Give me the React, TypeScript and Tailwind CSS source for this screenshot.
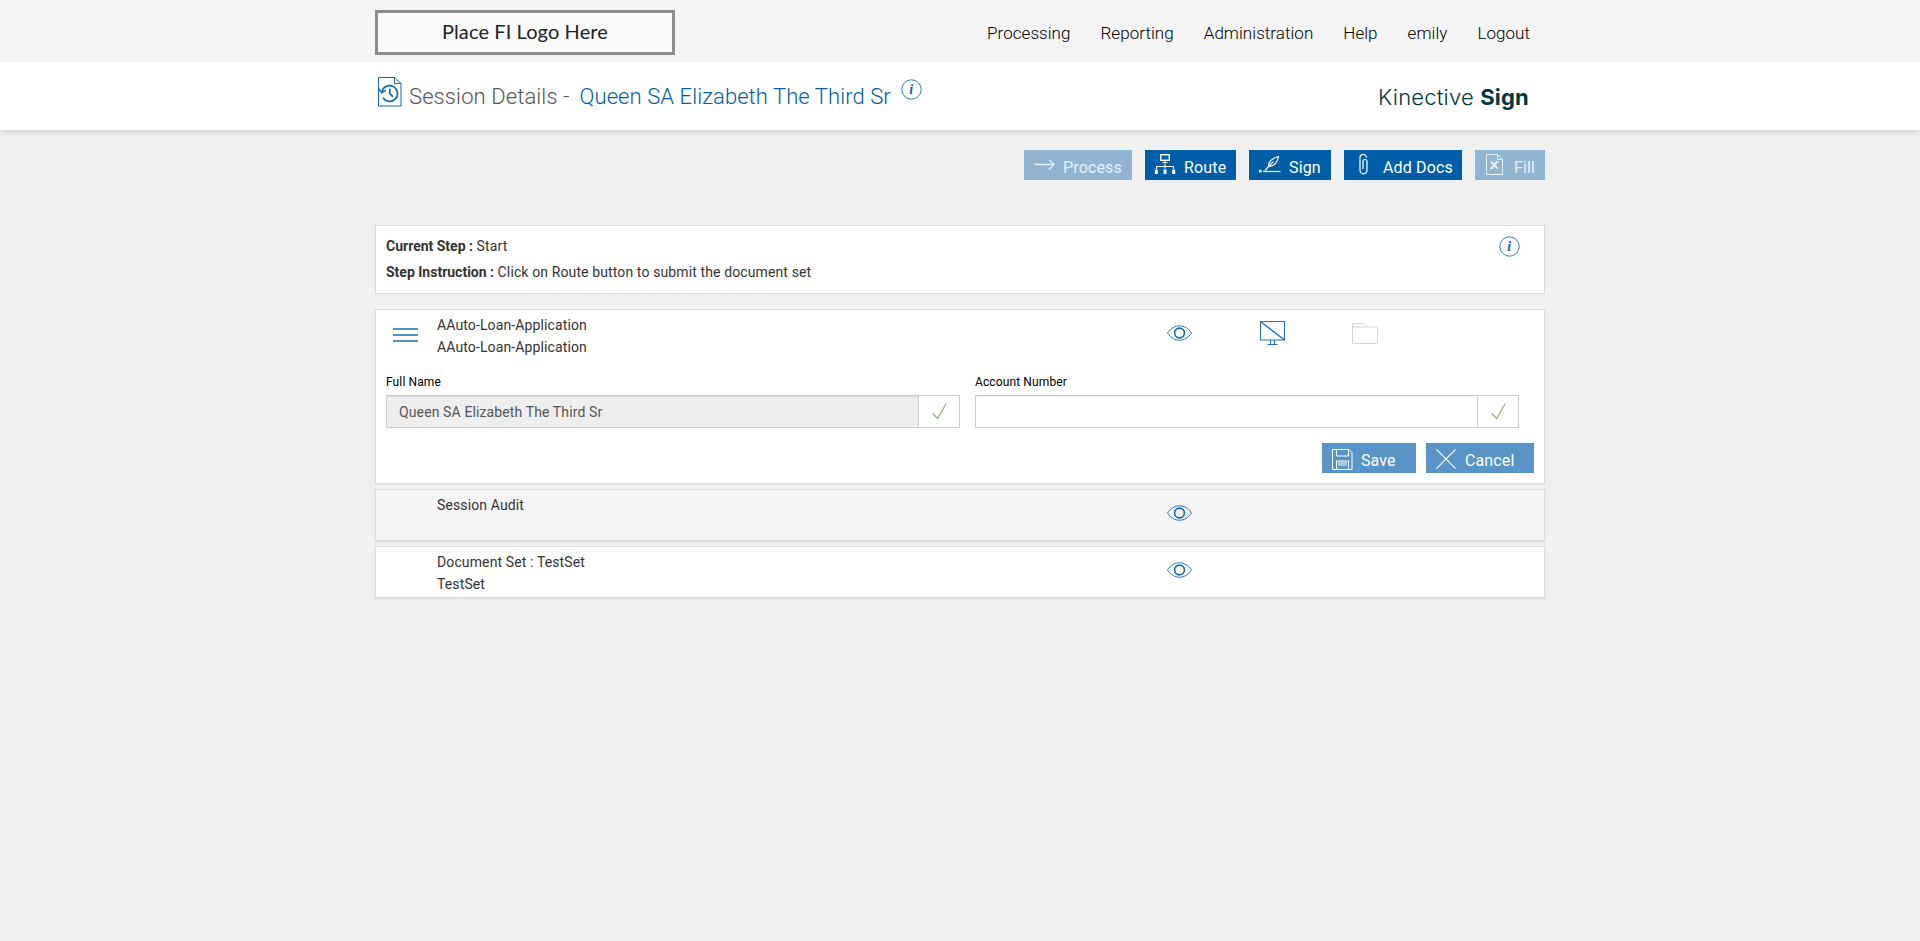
import React from "react";
import clsx from "clsx";

const NAV_LINKS = ["Processing", "Reporting", "Administration", "Help", "emily", "Logout"];

const InfoIcon = ({ className }: { className?: string }) => (
  <svg viewBox="0 0 21 21" className={clsx("w-[21px] h-[21px]", className)} fill="none">
    <circle cx="10.5" cy="10.5" r="9.7" stroke="#1a70b0" strokeWidth="0.9" />
    <text
      x="10.3"
      y="15.2"
      textAnchor="middle"
      fill="#0a62a8"
      className="font-['Liberation_Serif',serif] text-[14px] font-bold italic"
    >
      i
    </text>
  </svg>
);

const SessionIcon = () => (
  <svg viewBox="0 0 24 30" className="w-6 h-[30px]" fill="none" stroke="#0f68ac">
    <path d="M16.5 .5H.5v28.5h22.5V6.5z" strokeWidth="1" />
    <path d="M16.5 .5v6h6.5" strokeWidth="1" />
    <path d="M4 14.5a7.9 7.9 0 1 1 1 6.3" strokeWidth="1.6" />
    <path d="M1 12l2.8 3.8 4-2.6" strokeWidth="1.5" />
    <path d="M11.8 11.5v5l3 3.2" strokeWidth="1.7" />
  </svg>
);

const ArrowIcon = () => (
  <svg viewBox="0 0 22 12" className="w-[22px] h-3" fill="none" stroke="white" strokeWidth="1.3">
    <path d="M.5 5.5h20M15 .8l5 4.7-5 4.7" />
  </svg>
);

const RouteIcon = () => (
  <svg viewBox="0 0 22 21" className="w-[22px] h-[21px]" fill="none" stroke="white" strokeWidth="1">
    <rect x="6.7" y=".7" width="8.6" height="5.6" strokeWidth="1.4" />
    <path d="M8.5 8.5h5M11 6.5v8M2.5 15v-2.500h17V15" />
    <path d="M.8 15.500h3v4.500h-3zM9.500 15.500h3v4.500h-3zM18.200 15.500h3v4.500h-3z" fill="white" stroke="none" />
  </svg>
);

const SignIcon = () => (
  <svg viewBox="0 0 22 17" className="w-[22px] h-[17px]" fill="none" stroke="white" strokeWidth="1.2">
    <path d="M4 15.500h17.500" />
    <path d="M0 13.800h2.500v2.500H0z" fill="white" stroke="none" />
    <path d="M6 14.500l4-4.500M9.500 10.500c-.3-4.500 3.500-8 10-10-.8 5-4 9.500-10 10zM10.500 9.500l4-4" />
  </svg>
);

const ClipIcon = () => (
  <svg viewBox="0 0 9 21" className="w-[9px] h-[21px]" fill="none" stroke="white" strokeWidth="1.2">
    <path d="M1 4.500v11.500a3.500 3.800 0 0 0 7 0V7.500a2 2 0 0 0-4 0v7.500M1 5V4a3 3 0 0 1 6.500-.5" />
  </svg>
);

const FillIcon = () => (
  <svg viewBox="0 0 17 21" className="w-[17px] h-[21px]" fill="none" stroke="white" strokeWidth="1">
    <path d="M11.500 .5H.5v20h16v-15zM11.500 .5v5h5" />
    <path d="M5 7.500l6.500 7M11.500 7.500l-6.500 7" strokeWidth="2" />
    <path d="M4 14.500h3M10.500 7.500h2.500" />
  </svg>
);

const MenuIcon = () => (
  <svg viewBox="0 0 25 14" className="w-[25px] h-[14px]" stroke="#1a70b0" strokeWidth="1.500">
    <path d="M0 1h25M0 7h25M0 13h25" />
  </svg>
);

const EyeIcon = () => (
  <svg viewBox="0 0 25 16" className="w-[25px] h-4" fill="none" stroke="#0f68ac">
    <path d="M.5 8C4 3 8 .8 12.500 .8S21 3 24.500 8C21 13 17 15.200 12.500 15.200S4 13 .5 8z" strokeWidth=".9" />
    <circle cx="12.500" cy="8" r="4.900" strokeWidth="1.600" />
  </svg>
);

const MonitorIcon = () => (
  <svg viewBox="0 0 25 24" className="w-[25px] h-6" fill="none" stroke="#1a70b0" strokeWidth="1">
    <rect x=".5" y=".5" width="24" height="18.500" />
    <path d="M.5 .5l24 18.500" strokeWidth="1.300" />
    <path d="M10.500 19v4.500M14.500 19v4.500M7.500 23.500h10" />
  </svg>
);

const FolderIcon = () => (
  <svg viewBox="0 0 26 21" className="w-[26px] h-[21px]" fill="none" stroke="#d9d4d0" strokeWidth="1">
    <path d="M.5 20.500V.5h10.500l4 3.500h10.500v16.500zM.5 4h14.500" />
  </svg>
);

const CheckIcon = () => (
  <svg viewBox="0 0 15 17" className="w-[15px] h-[17px]" fill="none" stroke="#8fb36a" strokeWidth="1.200">
    <path d="M.7 10.500l5 5L14 .7" />
  </svg>
);

const SaveIcon = () => (
  <svg viewBox="0 0 21 21" className="w-[21px] h-[21px]" fill="none" stroke="white" strokeWidth="1">
    <path d="M.5 .5h16.500l3 3v17H.5z" />
    <path d="M4.500 .5v6.500h12V.5M4.500 20.500v-8.500h12v8.500M6 14h9M6 16h9" />
  </svg>
);

const CloseIcon = () => (
  <svg viewBox="0 0 20 20" className="w-5 h-5" stroke="white" strokeWidth="1.200">
    <path d="M.4 .4l19.200 19.200M19.600 .4L.4 19.600" />
  </svg>
);

type ActionProps = {
  label: string;
  icon: React.ReactNode;
  className: string;
  iconClass: string;
  disabled?: boolean;
};

const ActionButton = ({ label, icon, className, iconClass, disabled }: ActionProps) => (
  <button
    disabled={disabled}
    className={clsx(
      "flex h-[30px] items-start text-[16px] leading-5 tracking-[0.15px] text-white",
      disabled ? "bg-[#91b4d2]" : "bg-[#005ea8]",
      className
    )}
  >
    <span className={clsx("flex shrink-0 justify-start", disabled && "opacity-80", iconClass)}>{icon}</span>
    <span className={clsx("mt-[8px] whitespace-nowrap", disabled && "opacity-80")}>{label}</span>
  </button>
);

type FieldProps = {
  label: string;
  value?: string;
  disabled?: boolean;
  className: string;
};

const Field = ({ label, value, disabled, className }: FieldProps) => (
  <div className={className}>
    <label className="block h-5 text-[12px] leading-[14px] text-black">{label}</label>
    <div className="flex h-[33px] border border-[#ccc]">
      <div
        className={clsx(
          "flex-1 border-r border-[#ccc] pl-3 text-[14px] leading-[33px] text-[#555] shadow-[inset_0_1px_1px_rgba(0,0,0,0.075)]",
          disabled ? "bg-[#eee]" : "bg-white"
        )}
      >
        {value}
      </div>
      <div className="flex w-[40px] items-center justify-center bg-white">
        <CheckIcon />
      </div>
    </div>
  </div>
);

const App = () => {
  return (
    <div className="min-h-screen bg-[#f0f0f0] font-[Roboto,sans-serif] text-[14px] tracking-[0.12px] text-[#333]">
      <header className="h-[62px] bg-[#f4f4f4]">
        <div className="mx-auto flex w-[1170px] justify-between">
          <div className="mt-[10px] flex h-[45px] w-[300px] justify-center border-[3px] border-[#8c8c8c] bg-[#fafafa] pt-[6px] font-[Lato,sans-serif] text-[20px] leading-6 tracking-[0.1px] text-[#222]">
            Place FI Logo Here
          </div>
          <nav className="mr-[15px] mt-[23px] flex gap-[30px] text-[17px] font-light leading-5 tracking-[0.05px] text-black">
            {NAV_LINKS.map((link) => (
              <a key={link} href="#">
                {link}
              </a>
            ))}
          </nav>
        </div>
      </header>

      <div className="h-[68px] bg-white shadow-[0_4px_5px_-1px_rgba(0,0,0,0.12)]">
        <div className="mx-auto flex w-[1170px] items-start">
          <div className="ml-[3px] mt-[15px]">
            <SessionIcon />
          </div>
          <h1 className="ml-[7px] mt-[21px] whitespace-pre text-[22px] font-light leading-7 tracking-[0.1px] text-[#555]">
            Session Details -
          </h1>
          <span className="ml-[10px] mt-[21px] text-[22px] font-light leading-7 tracking-[0.08px] text-[#005ea8]">
            Queen SA Elizabeth The Third Sr
          </span>
          <InfoIcon className="ml-[10px] mt-[17px]" />
          <div className="ml-auto mr-[16px] mt-[21px] font-[Inter,sans-serif] text-[22px] leading-7 tracking-[0.2px] text-[#00383d]">
            <span className="font-light">Kinective</span> <span className="font-bold">Sign</span>
          </div>
        </div>
      </div>

      <main className="mx-auto w-[1170px]">
        <div className="flex justify-end gap-[13px] pt-5">
          <ActionButton label="Process" icon={<ArrowIcon />} disabled className="w-[108px] pl-[10px]" iconClass="w-[29px] pt-[9px]" />
          <ActionButton label="Route" icon={<RouteIcon />} className="w-[91px] pl-[9px]" iconClass="w-[30px] pt-[4px]" />
          <ActionButton label="Sign" icon={<SignIcon />} className="w-[82px] pl-[10px]" iconClass="w-[30px] pt-[6px]" />
          <ActionButton label="Add Docs" icon={<ClipIcon />} className="w-[118px] pl-[15px]" iconClass="w-[24px] pt-[4px]" />
          <ActionButton label="Fill" icon={<FillIcon />} disabled className="w-[70px] pl-[11px]" iconClass="w-[28px] pt-[4px]" />
        </div>

        <section className="mt-[45px] flex h-[69px] justify-between border border-[#d9d9d9] bg-white pl-[10px] pr-[24px]">
          <div className="pt-[7px] leading-[26px]">
            <p>
              <b className="tracking-normal">Current Step :</b> Start
            </p>
            <p>
              <b className="tracking-normal">Step Instruction :</b> Click on Route button to submit the document set
            </p>
          </div>
          <InfoIcon className="mt-[10px]" />
        </section>

        <section className="mt-[15px] h-[175px] border border-[#ddd] bg-white shadow-[0_1px_1px_rgba(0,0,0,0.05)]">
          <div className="flex h-[63px]">
            <div className="w-[61px] pl-[17px] pt-[18px]">
              <MenuIcon />
            </div>
            <div className="w-[730px] pt-[4px] leading-[22px]">
              <p>AAuto-Loan-Application</p>
              <p>AAuto-Loan-Application</p>
            </div>
            <div className="w-[93px] pt-[15px]">
              <EyeIcon />
            </div>
            <div className="w-[92px] pt-[11px]">
              <MonitorIcon />
            </div>
            <div className="pt-[13px]">
              <FolderIcon />
            </div>
          </div>
          <div className="flex gap-[15px] pl-[10px] pt-[2px]">
            <Field label="Full Name" value="Queen SA Elizabeth The Third Sr" disabled className="w-[574px]" />
            <Field label="Account Number" className="w-[544px]" />
          </div>
          <div className="flex justify-end gap-[10px] pr-[10px] pt-[15px] text-[16px] leading-5 text-white">
            <button className="flex h-[30px] w-[94px] bg-[#5894c5] pl-[10px] pt-[6px]">
              <SaveIcon />
              <span className="ml-[8px] mt-[2px]">Save</span>
            </button>
            <button className="flex h-[30px] w-[108px] bg-[#5894c5] pl-[10px] pt-[6px]">
              <CloseIcon />
              <span className="ml-[9px] mt-[2px]">Cancel</span>
            </button>
          </div>
        </section>

        <section className="mt-[5px] flex h-[52px] border border-[#ddd] bg-[#f4f4f4] pl-[61px] shadow-[0_1px_1px_rgba(0,0,0,0.05)]">
          <p className="w-[730px] pt-[4px] leading-[22px]">Session Audit</p>
          <div className="pt-[15px]">
            <EyeIcon />
          </div>
        </section>

        <section className="mt-[5px] flex h-[52px] border border-[#ddd] bg-white pl-[61px] shadow-[0_1px_1px_rgba(0,0,0,0.05)]">
          <div className="w-[730px] pt-[4px] leading-[22px]">
            <p>Document Set : TestSet</p>
            <p>TestSet</p>
          </div>
          <div className="pt-[15px]">
            <EyeIcon />
          </div>
        </section>
      </main>
    </div>
  );
};

export default App;
